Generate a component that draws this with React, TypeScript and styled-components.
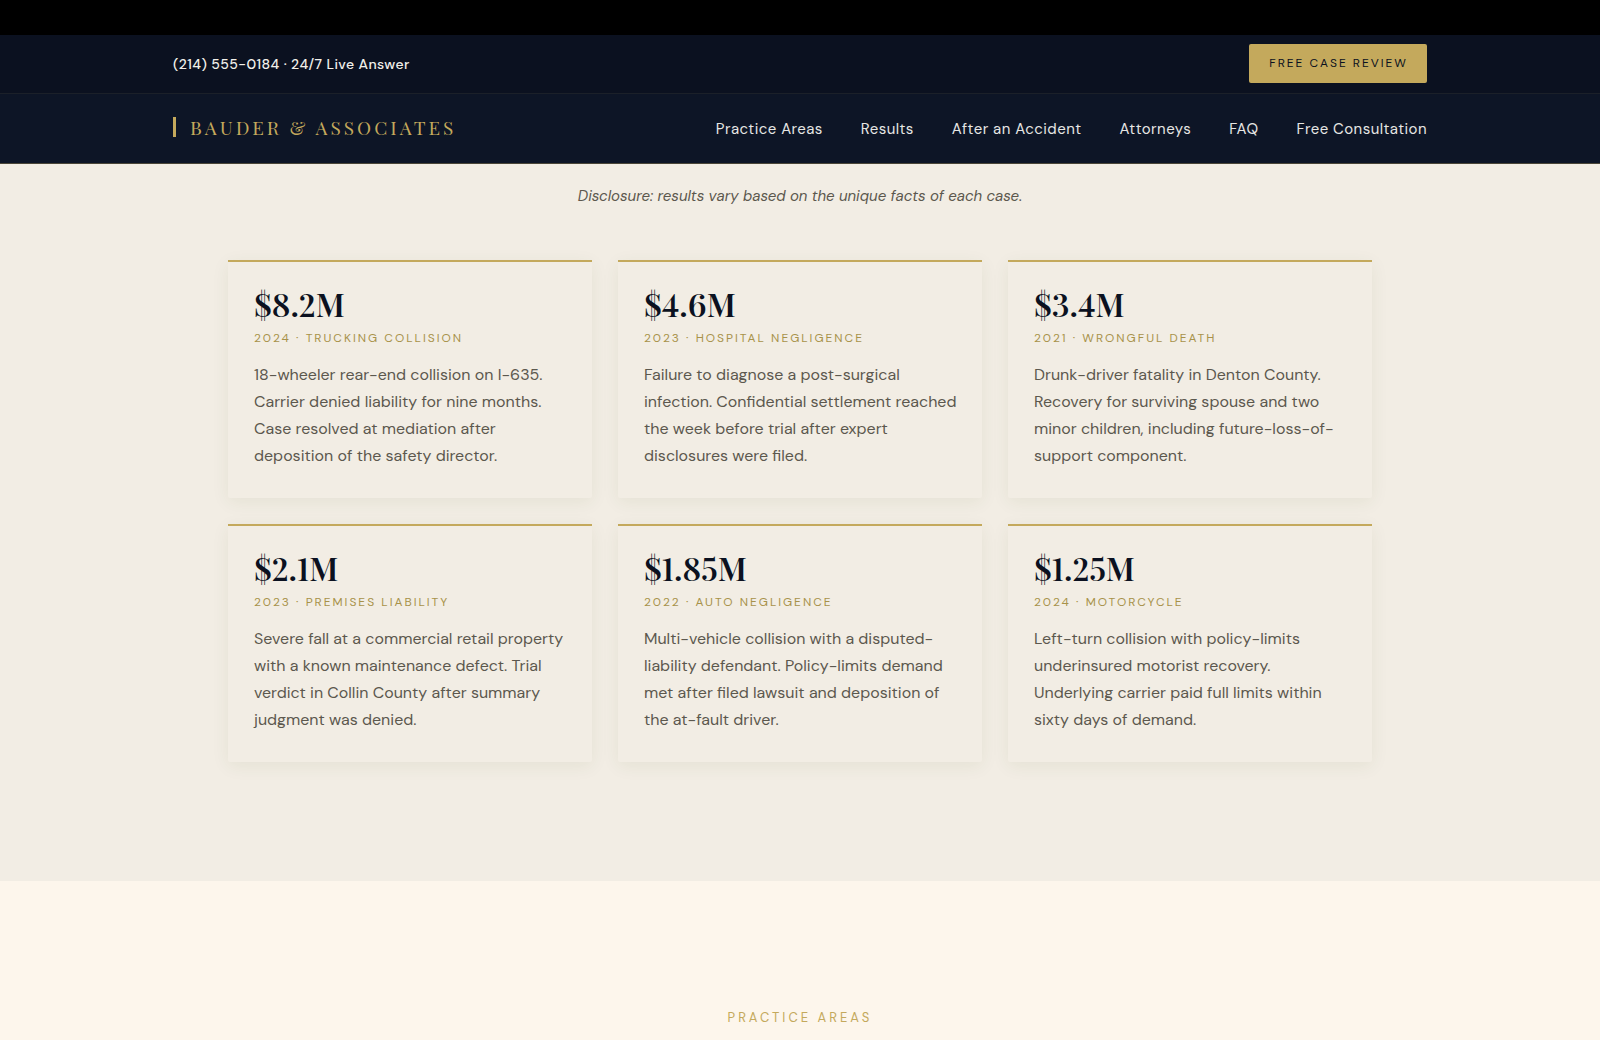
import React from "react";
import styled, { createGlobalStyle } from "styled-components";

const color = {
  ink: "#0b1120",
  navy: "#0d1526",
  gold: "#c4a95c",
  goldDeep: "#a8924a",
  paper: "#f2ede4",
  cream: "#fdf6ec",
  body: "#5c584e",
  light: "#e6e6e4",
};

const sans = `"DM Sans", Inter, "Liberation Sans", sans-serif`;
const serif = `"Playfair Display", "Liberation Serif", serif`;

const GlobalStyle = createGlobalStyle`
  *, *::before, *::after { box-sizing: border-box; }
  html { background: ${color.cream}; }
  body {
    margin: 0;
    font-family: ${sans};
    color: ${color.body};
    -webkit-font-smoothing: antialiased;
  }
  h1, h2, h3, p, ul { margin: 0; padding: 0; }
`;

const Page = styled.div`
  display: flex;
  flex-direction: column;
  min-height: 100vh;
`;

const Strip = styled.div`
  height: 35px;
  background: #000;
`;

const Header = styled.header`
  border-bottom: 1px solid #4a4638;
`;

const Bar = styled.div<{ $tone: string }>`
  padding: 0 32px;
  background: ${(p) => p.$tone};
  & + & {
    border-top: 1px solid #1b2029;
  }
`;

const BarInner = styled.div<{ $pad: string }>`
  display: flex;
  align-items: center;
  justify-content: space-between;
  flex-wrap: wrap;
  gap: 12px 32px;
  max-width: 1254px;
  margin: 0 auto;
  padding: ${(p) => p.$pad};
`;

const Phone = styled.a`
  color: #f2f0ea;
  font-size: 14px;
  font-weight: 500;
  line-height: 20px;
  letter-spacing: 0.03em;
  text-decoration: none;
`;

const ReviewButton = styled.button`
  padding: 10px 19px 10px 20px;
  border: 0;
  border-radius: 2px;
  background: ${color.gold};
  color: ${color.ink};
  font-family: inherit;
  font-size: 12px;
  font-weight: 400;
  line-height: 19px;
  letter-spacing: 2px;
  text-transform: uppercase;
  cursor: pointer;
`;

const Brand = styled.a`
  display: flex;
  align-items: center;
  gap: 14px;
  padding-bottom: 4px;
  color: ${color.gold};
  font-family: ${serif};
  font-size: 19px;
  font-weight: 400;
  line-height: 26px;
  letter-spacing: 3px;
  text-transform: uppercase;
  text-decoration: none;
  &::before {
    content: "";
    width: 3px;
    height: 20px;
    background: ${color.gold};
  }
`;

const NavList = styled.ul`
  display: flex;
  flex-wrap: wrap;
  gap: 8px 38px;
  list-style: none;
`;

const NavLink = styled.a`
  display: block;
  color: ${color.light};
  font-size: 15px;
  line-height: 30px;
  letter-spacing: 0.03em;
  text-decoration: none;
`;

const Results = styled.section`
  padding: 20px 32px 119px;
  background: ${color.paper};
`;

const Disclosure = styled.p`
  margin-bottom: 52px;
  font-size: 15px;
  font-style: italic;
  line-height: 24px;
  text-align: center;
`;

const Grid = styled.div`
  display: grid;
  grid-template-columns: repeat(auto-fit, minmax(320px, 1fr));
  gap: 26px;
  max-width: 1144px;
  margin: 0 auto;
`;

const Card = styled.article`
  padding: 22px 20px 29px 26px;
  border-top: 2px solid ${color.gold};
  border-radius: 0 0 2px 2px;
  background: ${color.paper};
  box-shadow: 0 4px 18px rgba(60, 80, 20, 0.07);
`;

const Amount = styled.h3`
  margin-bottom: 4px;
  color: ${color.ink};
  font-family: ${serif};
  font-size: 32px;
  font-weight: 600;
  font-variant-numeric: lining-nums;
  line-height: 40px;
`;

const Meta = styled.p`
  margin-bottom: 13px;
  color: ${color.goldDeep};
  font-size: 12px;
  font-weight: 400;
  line-height: 20px;
  letter-spacing: 2px;
  text-transform: uppercase;
`;

const Summary = styled.p`
  font-size: 16px;
  line-height: 27px;
`;

const Practice = styled.section`
  flex: 1;
  padding: 127px 32px 12px;
  background: ${color.cream};
`;

const Eyebrow = styled.h2`
  color: ${color.gold};
  font-size: 13px;
  font-weight: 400;
  line-height: 20px;
  letter-spacing: 3px;
  text-align: center;
  text-transform: uppercase;
`;

const links = ["Practice Areas", "Results", "After an Accident", "Attorneys", "FAQ", "Free Consultation"];

const results = [
  {
    amount: "$8.2M",
    meta: "2024 · Trucking Collision",
    text: "18-wheeler rear-end collision on I-635. Carrier denied liability for nine months. Case resolved at mediation after deposition of the safety director.",
  },
  {
    amount: "$4.6M",
    meta: "2023 · Hospital Negligence",
    text: "Failure to diagnose a post-surgical infection. Confidential settlement reached the week before trial after expert disclosures were filed.",
  },
  {
    amount: "$3.4M",
    meta: "2021 · Wrongful Death",
    text: "Drunk-driver fatality in Denton County. Recovery for surviving spouse and two minor children, including future-loss-of-support component.",
  },
  {
    amount: "$2.1M",
    meta: "2023 · Premises Liability",
    text: "Severe fall at a commercial retail property with a known maintenance defect. Trial verdict in Collin County after summary judgment was denied.",
  },
  {
    amount: "$1.85M",
    meta: "2022 · Auto Negligence",
    text: "Multi-vehicle collision with a disputed-liability defendant. Policy-limits demand met after filed lawsuit and deposition of the at-fault driver.",
  },
  {
    amount: "$1.25M",
    meta: "2024 · Motorcycle",
    text: "Left-turn collision with policy-limits underinsured motorist recovery. Underlying carrier paid full limits within sixty days of demand.",
  },
];

export default function App() {
  return (
    <Page>
      <GlobalStyle />
      <Strip />
      <Header>
        <Bar $tone={color.ink}>
          <BarInner $pad="9px 0 10px">
            <Phone href="tel:+12145550184">(214) 555-0184 · 24/7 Live Answer</Phone>
            <ReviewButton type="button">Free Case Review</ReviewButton>
          </BarInner>
        </Bar>
        <Bar $tone={color.navy}>
          <BarInner $pad="20px 0 19px">
            <Brand href="#top">Bauder &amp; Associates</Brand>
            <nav aria-label="Main">
              <NavList>
                {links.map((label) => (
                  <li key={label}>
                    <NavLink href={"#" + label.toLowerCase().replace(/ /g, "-")}>{label}</NavLink>
                  </li>
                ))}
              </NavList>
            </nav>
          </BarInner>
        </Bar>
      </Header>
      <main>
        <Results id="results">
          <Disclosure>Disclosure: results vary based on the unique facts of each case.</Disclosure>
          <Grid>
            {results.map((r) => (
              <Card key={r.amount}>
                <Amount>{r.amount}</Amount>
                <Meta>{r.meta}</Meta>
                <Summary>{r.text}</Summary>
              </Card>
            ))}
          </Grid>
        </Results>
        <Practice id="practice-areas">
          <Eyebrow>Practice Areas</Eyebrow>
        </Practice>
      </main>
    </Page>
  );
}
